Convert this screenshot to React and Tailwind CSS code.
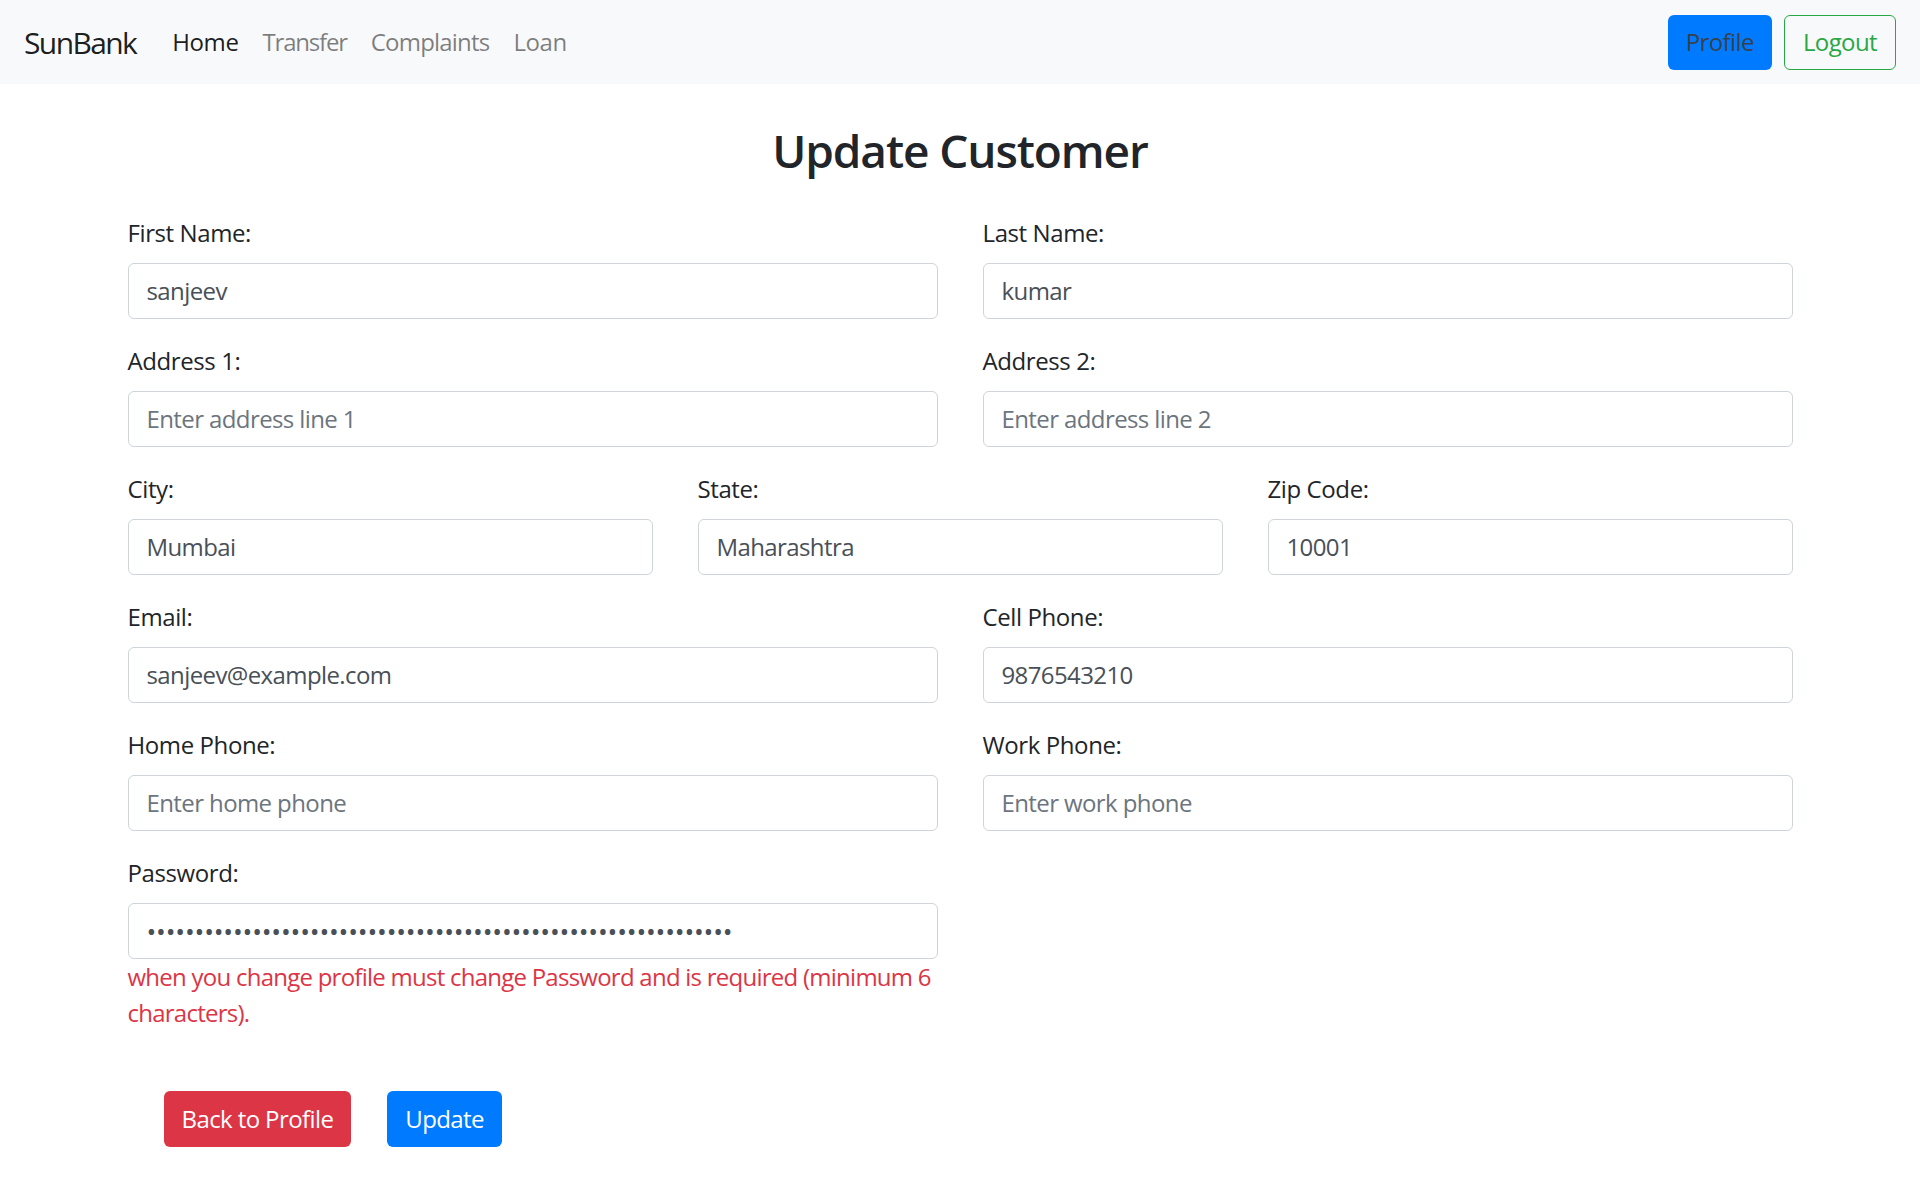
import React from "react";

function Field({ label, value, placeholder, type = "text" }) {
  return (
    <div className="mb-6">
      <label className="block text-[24px] leading-[36px] mb-3 text-[#212529]">{label}</label>
      <input
        type={type}
        defaultValue={value}
        placeholder={placeholder}
        className="block w-full h-[56px] border border-[#ced4da] rounded-[6px] px-[18px] text-[24px] leading-[36px] tracking-[-0.6px] text-[#495057] placeholder:text-[#6c757d] bg-white outline-none"
      />
    </div>
  );
}

export default function App() {
  return (
    <div className="min-h-[1182px] bg-white font-['Open_Sans',sans-serif] tracking-[-0.025em] text-[#212529]">
      <nav className="flex items-center justify-between h-[84px] px-6 bg-[#f8f9fa]">
        <div className="flex items-center">
          <span className="text-[30px] leading-[45px] mr-6 tracking-[-1.6px] text-[#000000e6]">SunBank</span>
          <a className="px-3 text-[24px] leading-[36px] text-[#000000e6]">Home</a>
          <a className="px-3 text-[24px] leading-[36px] tracking-[-1.2px] text-[#00000080]">Transfer</a>
          <a className="px-3 text-[24px] leading-[36px] tracking-[-0.8px] text-[#00000080]">Complaints</a>
          <a className="px-3 text-[24px] leading-[36px] text-[#00000080]">Loan</a>
        </div>
        <div className="flex items-center gap-3">
          <button className="h-[55px] px-[18px] rounded-[6px] bg-[#007bff] text-[24px] leading-[36px] tracking-[-0.6px] text-[#37414d]">Profile</button>
          <button className="h-[55px] px-[18px] rounded-[6px] border border-[#28a745] text-[24px] leading-[36px] tracking-[-0.6px] text-[#28a745]">Logout</button>
        </div>
      </nav>

      <main className="w-[1665px] mx-auto">
        <h2 className="text-center text-[46px] leading-[57.6px] font-semibold tracking-[-1.1px] mt-[38px] mb-[35px] text-[#212529]">Update Customer</h2>

        <div className="grid grid-cols-2 gap-x-[45px]">
          <Field label="First Name:" value="sanjeev" />
          <Field label="Last Name:" value="kumar" />
          <Field label="Address 1:" placeholder="Enter address line 1" />
          <Field label="Address 2:" placeholder="Enter address line 2" />
        </div>
        <div className="grid grid-cols-3 gap-x-[45px]">
          <Field label="City:" value="Mumbai" />
          <Field label="State:" value="Maharashtra" />
          <Field label="Zip Code:" value="10001" />
        </div>
        <div className="grid grid-cols-2 gap-x-[45px]">
          <Field label="Email:" value="sanjeev@example.com" />
          <Field label="Cell Phone:" value="9876543210" />
          <Field label="Home Phone:" placeholder="Enter home phone" />
          <Field label="Work Phone:" placeholder="Enter work phone" />
          <div className="mb-6">
            <label className="block text-[24px] leading-[36px] mb-3">Password:</label>
            <input
              type="password"
              defaultValue={"x".repeat(61)}
              className="block w-full h-[56px] border border-[#ced4da] rounded-[6px] px-[18px] text-[26px] leading-[36px] tracking-[-0.17px] text-[#495057] bg-white outline-none"
            />
            <div className="text-[24px] leading-[36px] tracking-[-0.75px] text-[#dc3545]">
              when you change profile must change Password and is required (minimum 6 characters).
            </div>
          </div>
        </div>

        <div className="flex mt-9">
          <button className="ml-9 h-[56px] px-[18px] rounded-[6px] bg-[#dc3545] text-white text-[24px] leading-[36px] tracking-[-0.6px]">Back to Profile</button>
          <button className="ml-9 h-[56px] px-[18px] rounded-[6px] bg-[#007bff] text-white text-[24px] leading-[36px] tracking-[-0.6px]">Update</button>
        </div>
      </main>
    </div>
  );
}
